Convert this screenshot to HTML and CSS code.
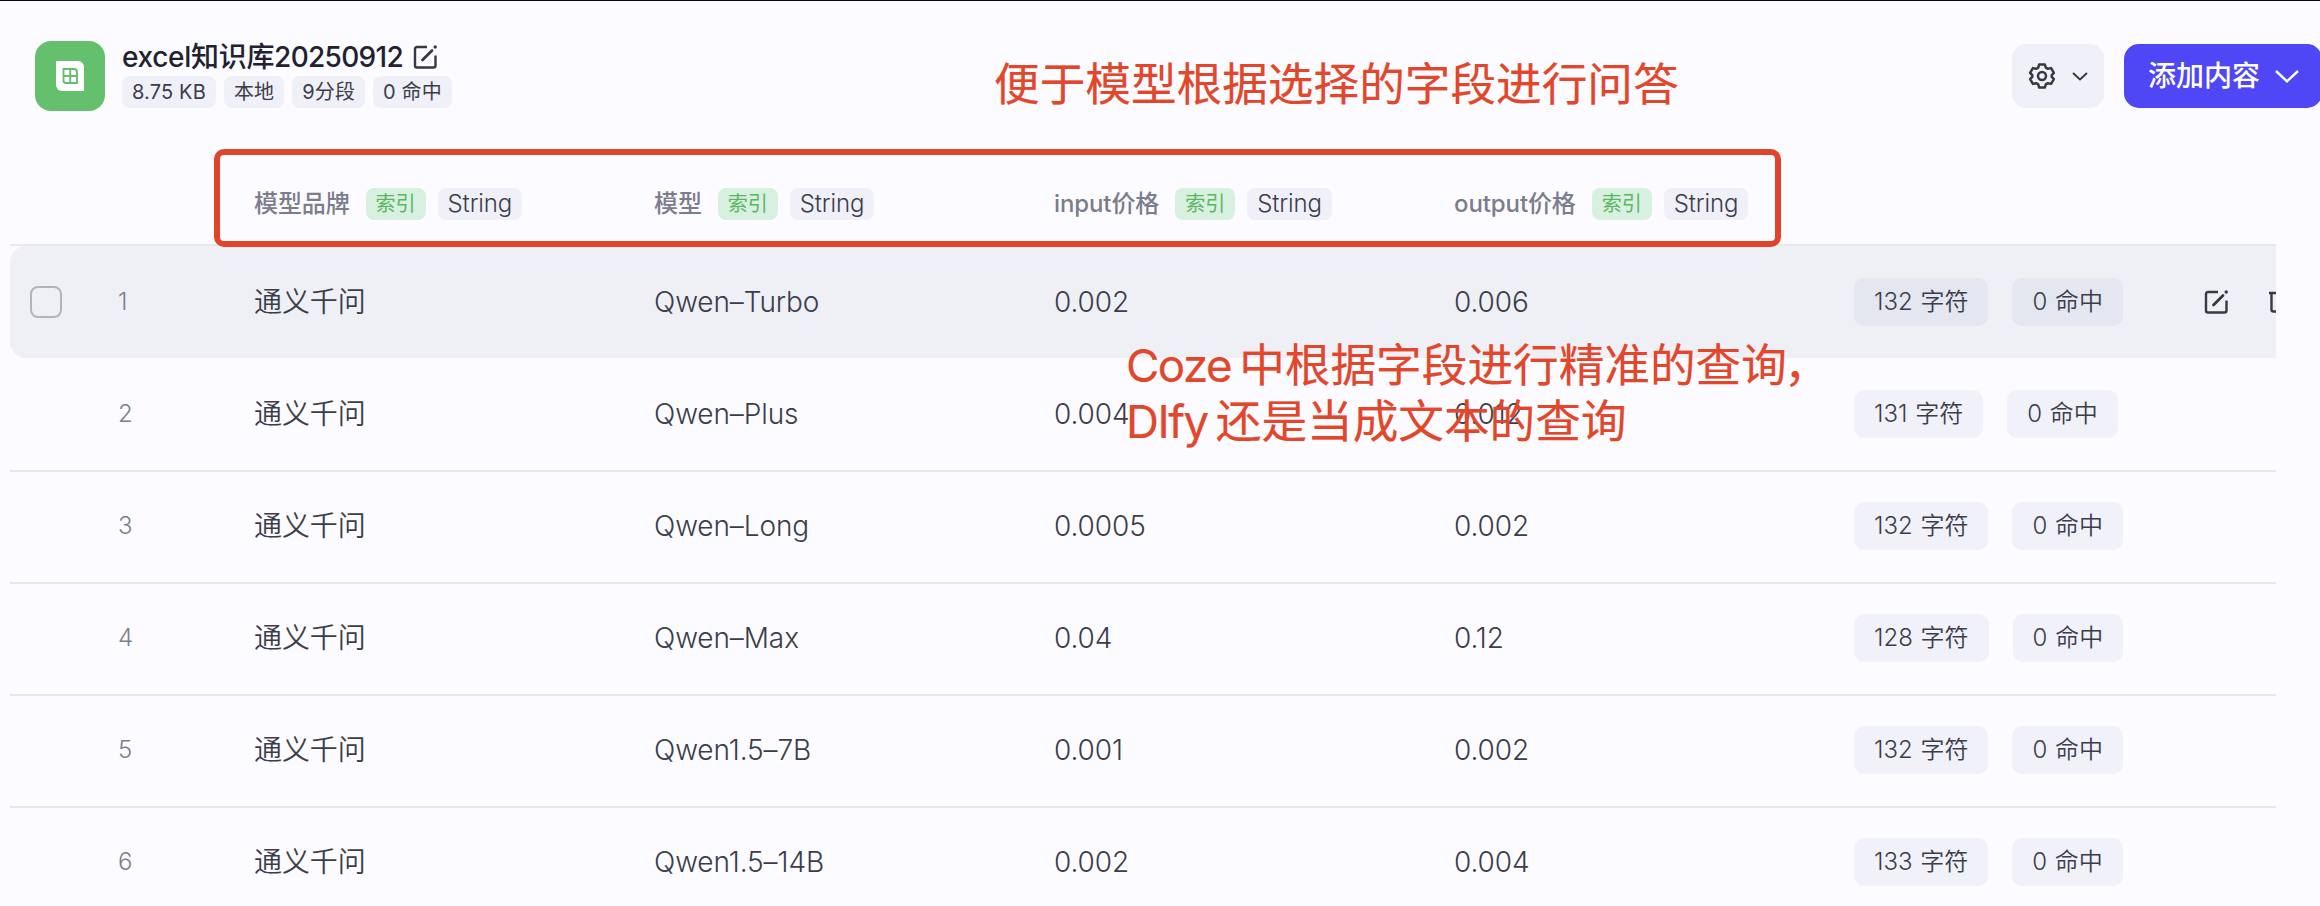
FILE: index.html
```html
<!DOCTYPE html>
<html lang="zh-CN">
<head>
<meta charset="utf-8">
<title>excel知识库20250912</title>
<link rel="stylesheet" href="styles.css">
</head>
<body>
<svg class="defs" aria-hidden="true">
  <symbol id="edit" viewBox="0 0 24 24"><path d="M14 2H4a2 2 0 0 0-2 2v16.500a2 2 0 0 0 2 2h16.500a2 2 0 0 0 2-2V10.500" fill="none" stroke="currentColor" stroke-width="2.400"/><path d="M9.500 15 19 5.500" fill="none" stroke="currentColor" stroke-width="2.800" stroke-linecap="round"/><circle cx="22.200" cy="2" r="1.700" fill="currentColor"/></symbol>
</svg>
<div class="page">
  <header class="topbar">
    <div class="logo">
      <svg width="28" height="30" viewBox="0 0 28 30"><path d="M0 0H22a6 6 0 0 1 6 6V30H6a6 6 0 0 1-6-6Z" fill="#fff"/><path d="M7.500 8H18a3 3 0 0 1 3 3v11H10a2.500 2.500 0 0 1-2.500-2.500ZM14.200 8v14M7.500 15H21" fill="none" stroke="#65c06e" stroke-width="1.900"/></svg>
    </div>
    <div class="info">
      <div class="title"><span>excel知识库<span class="digits">20250912</span></span><svg class="edit"><use href="#edit"/></svg></div>
      <div class="meta"><span>8.75 KB</span><span>本地</span><span>9分段</span><span>0 命中</span></div>
    </div>
    <div class="actions">
      <div class="settings">
        <svg width="26" height="26" viewBox="0 0 26 26" fill="none" stroke="#363845" stroke-width="2.500" stroke-linejoin="round"><path d="M10.200 1.500h5.600l1 3.100 2.100 1.200 3.200-.7 2.800 4.700-2.200 2.300v1.800l2.200 2.300-2.800 4.700-3.200-.7-2.100 1.200-1 3.100h-5.600l-1-3.100-2.100-1.200-3.200.7-2.800-4.700 2.200-2.300v-1.800L1.100 9.800l2.800-4.700 3.200.7 2.100-1.200Z"/><circle cx="13" cy="13" r="4"/></svg>
        <svg width="16" height="9" viewBox="0 0 16 9" fill="none" stroke="#363845" stroke-width="2"><path d="m1 1 7 6.500L15 1"/></svg>
      </div>
      <div class="add"><span>添加内容</span><svg width="24" height="13" viewBox="0 0 24 13" fill="none" stroke="#fff" stroke-width="2.400"><path d="m1 1 11 10.300L23 1"/></svg></div>
    </div>
  </header>

  <main class="table">
    <div class="head">
      <div class="field"><b>模型品牌</b><i>索引</i><em>String</em></div>
      <div class="field"><b>模型</b><i>索引</i><em>String</em></div>
      <div class="field"><b>input价格</b><i>索引</i><em>String</em></div>
      <div class="field"><b>output价格</b><i>索引</i><em>String</em></div>
    </div>
    <div class="row active"><span class="check"></span><span class="num">1</span><span class="cell">通义千问</span><span class="cell">Qwen–Turbo</span><span class="cell">0.002</span><span class="cell">0.006</span><div class="stats"><span>132 字符</span><span>0 命中</span></div>
      <div class="tools"><svg class="edit"><use href="#edit"/></svg><svg class="trash" viewBox="0 0 24 24" fill="none" stroke="currentColor" stroke-width="2.400"><path d="M0 3h24M2.500 3v16.500a2 2 0 0 0 2 2h15a2 2 0 0 0 2-2V3"/></svg></div></div>
    <div class="row"><span></span><span class="num">2</span><span class="cell">通义千问</span><span class="cell">Qwen–Plus</span><span class="cell">0.004</span><span class="cell">0.012</span><div class="stats"><span>131 字符</span><span>0 命中</span></div></div>
    <div class="row ruled"><span></span><span class="num">3</span><span class="cell">通义千问</span><span class="cell">Qwen–Long</span><span class="cell">0.0005</span><span class="cell">0.002</span><div class="stats"><span>132 字符</span><span>0 命中</span></div></div>
    <div class="row ruled"><span></span><span class="num">4</span><span class="cell">通义千问</span><span class="cell">Qwen–Max</span><span class="cell">0.04</span><span class="cell">0.12</span><div class="stats"><span>128 字符</span><span>0 命中</span></div></div>
    <div class="row ruled"><span></span><span class="num">5</span><span class="cell">通义千问</span><span class="cell">Qwen1.5–7B</span><span class="cell">0.001</span><span class="cell">0.002</span><div class="stats"><span>132 字符</span><span>0 命中</span></div></div>
    <div class="row ruled"><span></span><span class="num">6</span><span class="cell">通义千问</span><span class="cell">Qwen1.5–14B</span><span class="cell">0.002</span><span class="cell">0.004</span><div class="stats"><span>133 字符</span><span>0 命中</span></div></div>
  </main>

  <div class="frame"></div>
  <div class="note note-top">便于模型根据选择的字段进行问答</div>
  <div class="note note-mid"><div><span class="latin">Coze</span>中根据字段进行精准的查询<span class="comma">，</span></div><div><span class="latin">DIfy</span>还是当成文本的查询</div></div>
</div>
</body>
</html>
```
FILE: styles.css
```css
* { box-sizing: border-box; }
body { margin: 0; background: #fcfbff; color: #3b3d4b; font-family: Inter, "Noto Sans CJK SC", sans-serif; overflow: hidden; }
.defs { position: absolute; width: 0; height: 0; }
.page { position: relative; width: 2320px; height: 906px; overflow: hidden; border-top: 1px solid #08080a; white-space: nowrap; }
.topbar { height: 147px; padding: 40px 0 0 35px; display: flex; align-items: flex-start; }
.logo { width: 70px; height: 70px; border-radius: 16px; background: #65c06e; display: flex; align-items: center; justify-content: center; }
.info { margin-left: 17px; }
.title { height: 32px; display: flex; align-items: center; gap: 10px; font-size: 28px; font-weight: 500; line-height: 32px; color: #20222f; letter-spacing: -0.3px; }
.digits { letter-spacing: -0.7px; }
.edit { width: 24px; height: 24px; color: #363845; }
.meta { display: flex; gap: 8px; margin-top: 3px; }
.meta span { height: 32px; padding: 0 10px; border-radius: 8px; background: #f0f0f8; font-size: 20px; line-height: 32px; letter-spacing: 0.15px; }
.actions { margin: 3px -2px 0 auto; display: flex; gap: 20px; }
.settings { width: 92px; height: 64px; border-radius: 14px; background: #f0f0f8; display: flex; align-items: center; padding-left: 17px; gap: 17px; }
.add { width: 198px; height: 64px; padding-left: 24px; border-radius: 15px; background: #4f46f6; color: #fff; display: flex; align-items: center; gap: 15px; font-size: 28px; font-weight: 500; line-height: 40px; }

.table { width: 2266px; margin-left: 10px; overflow: hidden; }
.head { height: 98px; padding: 16px 0 0 244px; border-bottom: 2px solid #e8e8ed; display: grid; grid-template-columns: repeat(4, 400px); align-items: center; }
.field { display: flex; align-items: center; }
.field b { font-size: 24px; font-weight: 500; line-height: 32px; color: #7b7c8c; margin-right: 16px; letter-spacing: -0.1px; }
.field i, .field em { height: 32px; padding: 0 10px; border-radius: 8px; font-style: normal; line-height: 32px; }
.field i { font-size: 20px; color: #5ab660; background: #d8f0df; margin-right: 12px; }
.field em { font-size: 24px; font-weight: 350; background: #f0f0f8; letter-spacing: -0.15px; }
.row { height: 112px; display: grid; grid-template-columns: 87px 137px 400px 400px 400px 400px 350px 120px; padding-left: 20px; align-items: center; }
.cell { font-size: 28px; font-weight: 350; line-height: 40px; padding-bottom: 1px; letter-spacing: -0.1px; }
.row.ruled { border-top: 2px solid #e6e6eb; padding-bottom: 2px; }
.row.active { background: #eff0f5; border-radius: 16px 0 0 16px; }
.check { width: 32px; height: 32px; border: 2px solid #b3b4b8; border-radius: 8px; }
.num { font-size: 24px; font-weight: 350; line-height: 32px; padding: 0 0 1px 1px; color: #7d7e8c; }
.stats { display: flex; gap: 24px; }
.stats span { height: 48px; padding: 0 20px; border-radius: 10px; background: #f1f1f9; font-size: 24px; line-height: 47px; font-weight: 350; word-spacing: 1px; }
.active .stats span { background: #e4e6f0; }
.tools { display: flex; gap: 41px; }
.trash { width: 24px; height: 24px; flex: none; color: #363845; }

.frame { position: absolute; left: 214px; top: 148px; width: 1567px; height: 98px; border: 6px solid #e0452c; border-radius: 10px; }
.note { position: absolute; color: #e2462b; font-size: 45.650px; line-height: 56px; -webkit-text-stroke: 0.2px #e2462b; }
.note-top { left: 994px; top: 56px; }
.note-mid { left: 1126px; top: 337px; }
.latin { letter-spacing: -1.5px; margin-right: 8px; }
.comma { margin-left: -3px; }
```
